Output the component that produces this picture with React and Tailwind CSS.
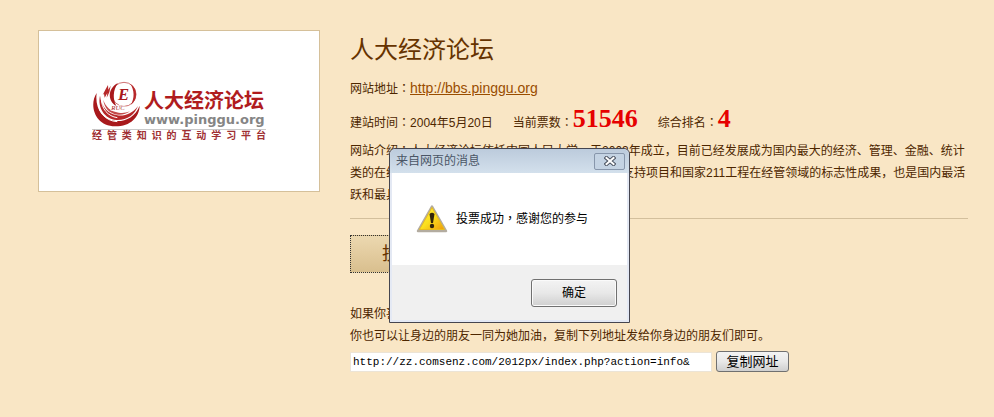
const LINK = 'http://bbs.pinggu.org'
const SHARE_URL = 'http://zz.comsenz.com/2012px/index.php?action=info&'

const cjk = "font-['Liberation_Sans','Noto_Sans_CJK_SC',sans-serif]"

// Full-width punctuation centred in its box
function Mark({ children }) {
  return <span className="font-['Noto_Sans_CJK_TC',sans-serif]">{children}</span>
}

function Emblem() {
  return (
    <svg viewBox="34 36 144 138" className="h-[46px] w-12 shrink-0" aria-hidden="true">
      {/* crescents */}
      <path d="M48 72C24 108 42 172 104 172c46 0 72-28 73-62-14 34-42 48-72 46C64 153 42 116 48 72z" fill="#a8191c" />
      <path d="M58 80c-8 36 14 70 50 73 32 1 54-16 64-42-18 24-40 31-62 28C82 134 62 114 58 80z" fill="#b7282a" />
      <path d="M68 92c2 24 18 42 44 45 14 1 26-3 36-10-12 5-24 6-34 4-24-4-40-18-46-39z" fill="#c44a4a" />
      <path d="M52 84c-4 42 20 72 58 74M62 88c0 32 20 54 48 58" fill="none" stroke="#fff" strokeWidth="3" />
      {/* flame */}
      <path d="M66 78l8-16 8-14 1 14 7-12-4 20-8 16 2-14-8 14-2-12z" fill="#b7282a" />
      {/* ring */}
      <circle cx="130" cy="76" r="36" fill="#fff" stroke="#b7282a" strokeWidth="2" />
      <path d="M112 42c-32 16-32 54-4 70-12-20-12-48 4-70z" fill="#a8191c" />
      <path d="M148 44c24 14 24 48 2 64 12-20 12-46-2-64z" fill="#b7282a" />
      <text x="112" y="92" fontSize="50" fontWeight="bold" fontStyle="italic" fill="#a8191c" fontFamily="Liberation Serif, serif">E</text>
      <text x="92" y="124" fontSize="20" fontStyle="italic" fill="#a8191c" stroke="#fff" strokeWidth="3" paintOrder="stroke" fontFamily="Liberation Serif, serif">RUC</text>
    </svg>
  )
}

function SiteLogo() {
  return (
    <div className="flex w-[174px] flex-col">
      <div className="flex items-end gap-1">
        <Emblem />
        <div className="flex flex-col whitespace-nowrap">
          <span className="text-xl leading-6 font-bold text-[#b01c1e]">人大经济论坛</span>
          <span className="font-['DejaVu_Sans',sans-serif] text-[13px] leading-3.5 font-bold text-[#858585]">www.pinggu.org</span>
        </div>
      </div>
      <div className="mt-0.5 flex justify-between border-t border-[#c9c9c9] text-[10px] leading-3 font-bold text-[#a03033]">
        {[...'经管类知识的互动学习平台'].map((char) => (
          <span key={char}>{char}</span>
        ))}
      </div>
    </div>
  )
}

function WarningIcon() {
  return (
    <svg viewBox="0 0 32 30" className="h-[30px] w-8 shrink-0" aria-hidden="true">
      <defs>
        <linearGradient id="warn" x1="0" y1="0" x2="1" y2="1">
          <stop offset="0" stopColor="#ffe94a" />
          <stop offset="0.5" stopColor="#fbe01f" />
          <stop offset="1" stopColor="#f09a08" />
        </linearGradient>
      </defs>
      <path d="M16 2.5L30 27H2z" fill="#c4bcae" stroke="#b3aca0" strokeWidth="2.5" strokeLinejoin="round" />
      <path d="M16 3.5L28.500 25.500H3.500z" fill="url(#warn)" stroke="#e9bd1c" strokeWidth="1" strokeLinejoin="round" />
      <path d="M13.500 10q2.500-2.500 5 0l-1.500 9h-2z" fill="#33250a" />
      <circle cx="16" cy="22" r="2.200" fill="#33250a" />
    </svg>
  )
}

function MessageDialog() {
  return (
    <div
      role="alertdialog"
      aria-labelledby="dialog-title"
      aria-describedby="dialog-text"
      className="absolute top-[148px] left-[389px] flex w-[241px] flex-col rounded-t-md border border-[#45454f] bg-[#e4e9f4] text-xs text-black"
    >
      <div className="flex h-6 items-center justify-between rounded-t-md bg-linear-to-b from-[#bccbdc] to-[#d3e0ec] pr-1 pl-1.5">
        <h2 id="dialog-title" className="text-[#4a5666]">来自网页的消息</h2>
        <button type="button" aria-label="关闭" className="flex h-[17px] w-[31px] items-center justify-center rounded-xs border border-[#8796ab] bg-[#c4d3e3]">
          <svg viewBox="0 0 12 10" className="h-2.5 w-3" aria-hidden="true">
            <path d="M2.500 2l7 6M9.500 2l-7 6" stroke="#4a5260" strokeWidth="4" strokeLinecap="square" />
            <path d="M2.500 2l7 6M9.500 2l-7 6" stroke="#fff" strokeWidth="2" strokeLinecap="square" />
          </svg>
        </button>
      </div>
      <div className="mx-0.5 flex h-[92px] items-center gap-2 bg-white pl-6">
        <WarningIcon />
        <p id="dialog-text" className="pb-0.5">投票成功<Mark>，</Mark>感谢您的参与</p>
      </div>
      <div className="mx-0.5 mb-0.5 flex h-[55px] items-center justify-end bg-[#f0f0f0] pr-2.5">
        <button type="button" className="h-7 w-[86px] rounded-[3px] border border-[#707070] bg-linear-to-b from-[#f3f3f3] via-[#e8e8e8] to-[#cfcfcf] shadow-[inset_0_0_0_1px_#fafafa]">
          确定
        </button>
      </div>
    </div>
  )
}

export default function App() {
  return (
    <main className={`relative min-h-screen bg-[#f9e6c5] pb-11 text-xs text-[#4d2600] ${cjk}`}>
      <div className="flex items-start gap-[30px] pt-[30px] pr-[26px] pl-[38px]">
        <div className="flex h-[162px] w-[282px] shrink-0 items-center justify-center border border-[#d5c09a] bg-white">
          <SiteLogo />
        </div>

        <div className="min-w-0 flex-1 whitespace-nowrap">
          <h1 className="text-2xl leading-10 text-[#663300]">人大经济论坛</h1>
          <p className="mt-1.5 leading-6">
            网站地址<Mark>：</Mark>
            <a href={LINK} className="text-sm text-[#994d00] underline">{LINK}</a>
          </p>
          <p className="mt-0.5 flex items-baseline gap-5 leading-8">
            <span>建站时间<Mark>：</Mark>2004年5月20日</span>
            <span>
              当前票数<Mark>：</Mark>
              <b className="font-['Liberation_Serif',serif] text-[26px] text-[#e60000]">51546</b>
            </span>
            <span>
              综合排名<Mark>：</Mark>
              <b className="font-['Liberation_Serif',serif] text-[26px] text-[#e60000]">4</b>
            </span>
          </p>
          <p className="leading-[22px]">
            网站介绍<Mark>：</Mark>人大经济论坛依托中国人民大学，于2003年成立，目前已经发展成为国内最大的经济、管理、金融、统计
            <br />
            类的在线教育和咨询类网站，也是国家985计划重点支持项目和国家211工程在经管领域的标志性成果，也是国内最活
            <br />
            跃和最具影响力的经济论坛。
          </p>

          <hr className="mt-3 border-[#d3bf9c]" />

          <button type="button" className="mt-4 h-[38px] w-[136px] border border-dotted border-[#333] bg-linear-to-b from-[#ecd8b0] to-[#d9bf8e] text-lg text-[#663300]">
            投她一票
          </button>

          <p className="mt-[30px] leading-[22px]">
            如果你喜欢她，请投她一票。
            <br />
            你也可以让身边的朋友一同为她加油，复制下列地址发给你身边的朋友们即可。
          </p>
          <div className="mt-1 flex items-center gap-1">
            <input
              type="text"
              readOnly
              aria-label="网址"
              defaultValue={SHARE_URL}
              className="h-5 w-[362px] border border-[#ece4d6] bg-white px-0.5 font-['Liberation_Mono',monospace] text-[11px] text-black"
            />
            <button type="button" className="h-[21px] w-[73px] rounded-[3px] border border-[#707070] bg-linear-to-b from-[#f3f3f3] via-[#e8e8e8] to-[#cfcfcf] text-[13px] leading-4 text-black">
              复制网址
            </button>
          </div>
        </div>
      </div>

      <MessageDialog />
    </main>
  )
}
